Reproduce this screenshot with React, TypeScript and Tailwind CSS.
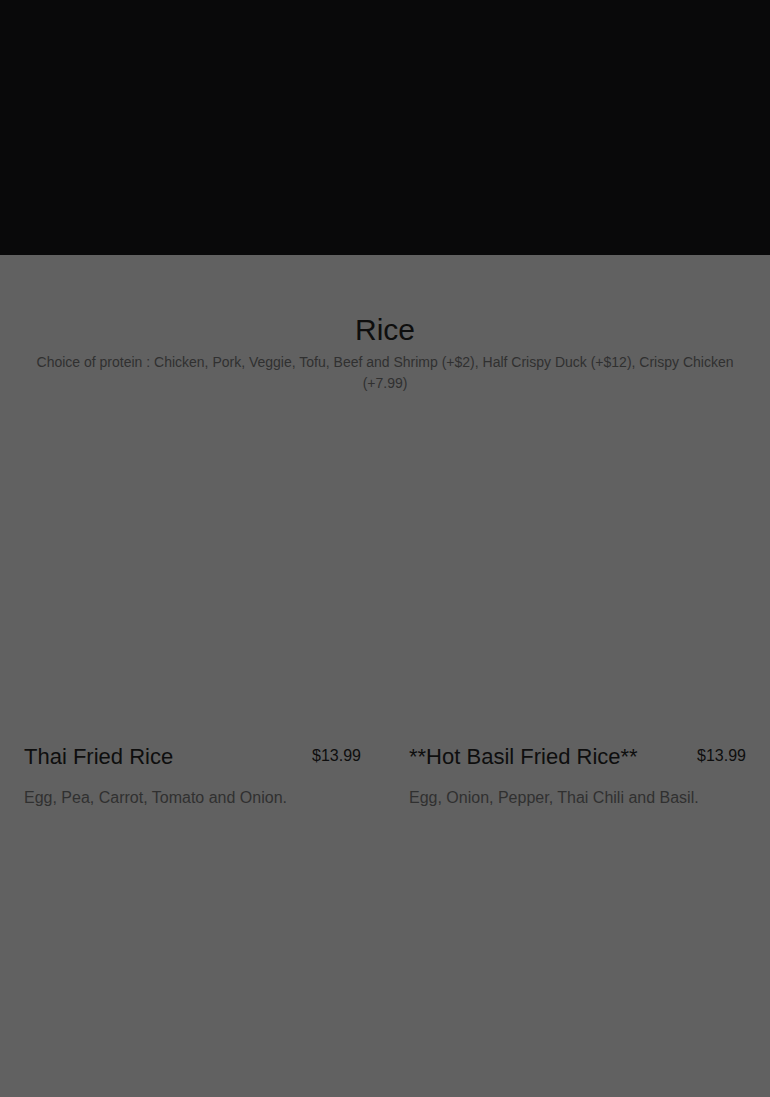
const items = [
    { name: "Thai Fried Rice", price: "$13.99", desc: "Egg, Pea, Carrot, Tomato and Onion." },
    { name: "**Hot Basil Fried Rice**", price: "$13.99", desc: "Egg, Onion, Pepper, Thai Chili and Basil." },
];

export default function App() {
    return (
        <div className="min-h-[1097px] bg-[#616161] font-['Liberation_Sans',Arial,sans-serif]">
            <div className="h-[255px] bg-[#09090a]"></div>
            <div className="px-6 pt-[57px] pb-20">
                <h2 className="text-center text-[30px] leading-[36px] text-[#0e0e0e]">Rice</h2>
                <p className="mt-[4px] text-center text-sm leading-[21px] text-[#303030]">
                    Choice of protein : Chicken, Pork, Veggie, Tofu, Beef and Shrimp (+$2), Half Crispy Duck (+$12), Crispy Chicken (+7.99)
                </p>
                <div className="mt-[30px] grid grid-cols-2 gap-12">
                    {items.map((a) => (
                        <div key={a.name}>
                            <div className="h-[320px]"></div>
                            <div className="flex items-start justify-between gap-4">
                                <p className="text-[22px] leading-[26px] text-[#0e0e0e]">{a.name}</p>
                                <p className="text-base leading-[24px] text-[#0e0e0e]">{a.price}</p>
                            </div>
                            <p className="mt-[16px] text-base leading-[24px] text-[#303030]">{a.desc}</p>
                        </div>
                    ))}
                </div>
            </div>
        </div>
    )
}
